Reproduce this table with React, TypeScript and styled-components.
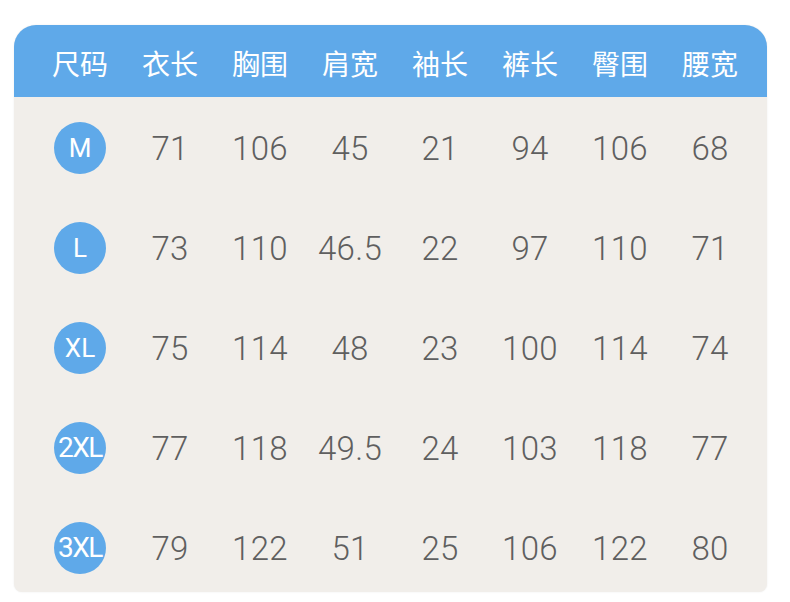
import React from 'react';
import styled, { createGlobalStyle } from 'styled-components';

const GlobalStyle = createGlobalStyle`
  html, body {
    margin: 0;
    padding: 0;
    background: #ffffff;
  }
`;

const Page = styled.div`
  width: 790px;
  height: 602px;
  padding: 25px 23px 0 14px;
  box-sizing: border-box;
`;

const Card = styled.div`
  width: 753px;
  height: 567px;
  border-radius: 22px 22px 8px 8px;
  background: #f1eeea;
  overflow: hidden;
  box-shadow: 0 0 2px rgba(0, 0, 0, 0.08);
`;

const Header = styled.div`
  display: grid;
  grid-template-columns: repeat(8, 90px);
  align-items: center;
  height: 72px;
  padding-left: 21px;
  background: #5fa9e9;
`;

const HeadCell = styled.div`
  text-align: center;
  color: #ffffff;
  font-family: 'Noto Sans CJK SC', sans-serif;
  font-weight: 400;
  font-size: 28px;
  line-height: 1;
  padding-top: 4px;
`;

const Body = styled.div`
  padding-top: 1px;
`;

const Row = styled.div`
  display: grid;
  grid-template-columns: repeat(8, 90px);
  align-items: center;
  height: 100px;
  padding-left: 21px;
`;

const Cell = styled.div`
  text-align: center;
  color: #5f5f5f;
  font-family: Roboto, 'Liberation Sans', sans-serif;
  font-weight: 300;
  font-size: 33px;
  letter-spacing: 0.3px;
  line-height: 1;
`;

const SizeCell = styled.div`
  display: flex;
  justify-content: center;
`;

const Badge = styled.div<{ $long: boolean }>`
  width: 52px;
  height: 52px;
  border-radius: 50%;
  background: #5fa9e9;
  display: flex;
  align-items: center;
  justify-content: center;
  color: #ffffff;
  font-family: Roboto, 'Liberation Sans', sans-serif;
  font-weight: 400;
  font-size: ${(p) => (p.$long ? '28px' : '26px')};
  letter-spacing: ${(p) => (p.$long ? '-1.5px' : '0')};
  white-space: nowrap;
  line-height: 1;
`;

const columns = ['尺码', '衣长', '胸围', '肩宽', '袖长', '裤长', '臀围', '腰宽'];

const rows = [
  { size: 'M', values: ['71', '106', '45', '21', '94', '106', '68'] },
  { size: 'L', values: ['73', '110', '46.5', '22', '97', '110', '71'] },
  { size: 'XL', values: ['75', '114', '48', '23', '100', '114', '74'] },
  { size: '2XL', values: ['77', '118', '49.5', '24', '103', '118', '77'] },
  { size: '3XL', values: ['79', '122', '51', '25', '106', '122', '80'] },
];

const App: React.FC = () => (
  <>
    <GlobalStyle />
    <Page>
      <Card>
        <Header>
          {columns.map((c) => (
            <HeadCell key={c}>{c}</HeadCell>
          ))}
        </Header>
        <Body>
          {rows.map((r) => (
            <Row key={r.size}>
              <SizeCell>
                <Badge $long={r.size.length > 2}>{r.size}</Badge>
              </SizeCell>
              {r.values.map((v, i) => (
                <Cell key={i}>{v}</Cell>
              ))}
            </Row>
          ))}
        </Body>
      </Card>
    </Page>
  </>
);

export default App;
